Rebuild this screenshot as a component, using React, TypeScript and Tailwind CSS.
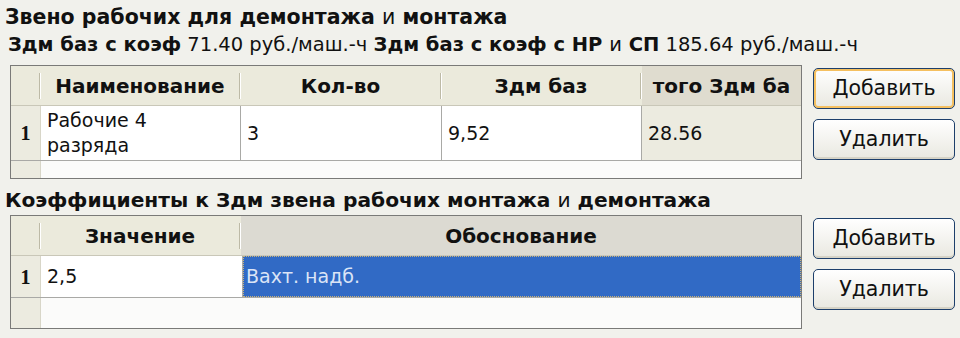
import React from "react";

const font = "font-['DejaVu_Sans',sans-serif]";

function HeaderCell({
  children,
  className = "",
  sep = true,
}: {
  children?: React.ReactNode;
  className?: string;
  sep?: boolean;
}) {
  return (
    <div className={`flex items-center h-full ${className}`}>
      <div className="flex-1 text-center font-bold text-[20px] text-[#111] whitespace-nowrap overflow-hidden">
        {children}
      </div>
      {sep && <div className="w-[2px] h-[26px] border-l border-[#bdbaa6] bg-white shrink-0" />}
    </div>
  );
}

function RowNum({ n }: { n?: string }) {
  return (
    <div className="w-[30px] shrink-0 h-full bg-[#ecebe0] border-r border-[#d8d6c8] flex items-center justify-center font-['Liberation_Serif',serif] font-bold text-[20px] text-[#111]">
      {n}
    </div>
  );
}

function XpButton({ label, focus }: { label: string; focus?: boolean }) {
  return (
    <button
      className={`w-[142px] h-[41px] rounded-[5px] border border-[#1d3f6b] bg-gradient-to-b from-[#ffffff] to-[#e9e8e0] text-[20.5px] text-[#111] ${
        focus ? "shadow-[inset_0_0_0_2px_#f5c060]" : "shadow-[inset_0_-2px_0_#d6d3c6]"
      }`}
    >
      {label}
    </button>
  );
}

export default function App() {
  return (
    <div className={`w-[960px] h-[338px] bg-[#f1f1ec] overflow-hidden text-[#111] ${font}`}>
      <div className="pl-[5px] pt-[3px] h-[31px] text-[20.5px] font-bold leading-[28px] whitespace-nowrap">
        Звено рабочих для демонтажа <span className="font-normal">и</span> монтажа
      </div>
      <div className="pl-[8px] h-[31px] text-[19.5px] leading-[28px] whitespace-nowrap">
        <b>Здм баз с коэф</b> 71.40 руб./маш.-ч <b>Здм баз с коэф с НР <span className="font-normal">и</span> СП</b>{" "}
        185.64 руб./маш.-ч
      </div>

      <div className="flex mt-[3px]">
        <div className="ml-[10px] w-[792px] h-[114px] border border-[#7a7a78] bg-[#fbfbfa] flex flex-col">
          <div className="h-[40px] flex bg-[#ebeadc] border-b border-[#c9c7b8]">
            <HeaderCell className="w-[30px]" />
            <HeaderCell className="w-[200px]">Наименование</HeaderCell>
            <HeaderCell className="w-[201px]">Кол-во</HeaderCell>
            <HeaderCell className="w-[200px]">Здм баз</HeaderCell>
            <HeaderCell className="flex-1 bg-[#dfdccf]" sep={false}>
              того Здм ба
            </HeaderCell>
          </div>
          <div className="h-[55px] flex border-b border-[#a9a9a6] text-[19px]">
            <RowNum n="1" />
            <div className="w-[200px] bg-white border-r border-[#a9a9a6] pl-[6px] leading-[25px] flex flex-col justify-center">
              <span>Рабочие 4</span>
              <span>разряда</span>
            </div>
            <div className="w-[201px] bg-white border-r border-[#a9a9a6] pl-[6px] flex items-center">3</div>
            <div className="w-[200px] bg-white border-r border-[#a9a9a6] pl-[6px] flex items-center">9,52</div>
            <div className="flex-1 bg-[#ecebe0] pl-[6px] flex items-center">28.56</div>
          </div>
          <div className="flex-1 flex">
            <RowNum />
          </div>
        </div>
        <div className="ml-[11px] flex flex-col gap-[10px] mt-[3px]">
          <XpButton label="Добавить" focus />
          <XpButton label="Удалить" />
        </div>
      </div>

      <div className="pl-[5px] mt-[7px] h-[29px] text-[20.2px] font-bold leading-[28px] whitespace-nowrap">
        Коэффициенты к Здм звена рабочих монтажа <span className="font-normal">и</span> демонтажа
      </div>

      <div className="flex">
        <div className="ml-[10px] w-[792px] h-[114px] border border-[#7a7a78] bg-[#fbfbfa] flex flex-col">
          <div className="h-[40px] flex bg-[#ebeadc] border-b border-[#c9c7b8]">
            <HeaderCell className="w-[30px]" />
            <HeaderCell className="w-[200px]">Значение</HeaderCell>
            <HeaderCell className="flex-1 bg-[#dcdad2]" sep={false}>
              Обоснование
            </HeaderCell>
          </div>
          <div className="h-[42px] flex border-b border-[#a9a9a6] text-[19px]">
            <RowNum n="1" />
            <div className="w-[202px] bg-white border-r border-[#a9a9a6] pl-[6px] flex items-center">2,5</div>
            <div className="flex-1 bg-[#316ac5] border border-dotted border-[#c9b27a] pl-[2px] flex items-center text-[#dbe4f6]">
              Вахт. надб.
            </div>
          </div>
          <div className="flex-1 flex">
            <RowNum />
          </div>
        </div>
        <div className="ml-[11px] flex flex-col gap-[10px] mt-[3px]">
          <XpButton label="Добавить" />
          <XpButton label="Удалить" />
        </div>
      </div>
    </div>
  );
}
